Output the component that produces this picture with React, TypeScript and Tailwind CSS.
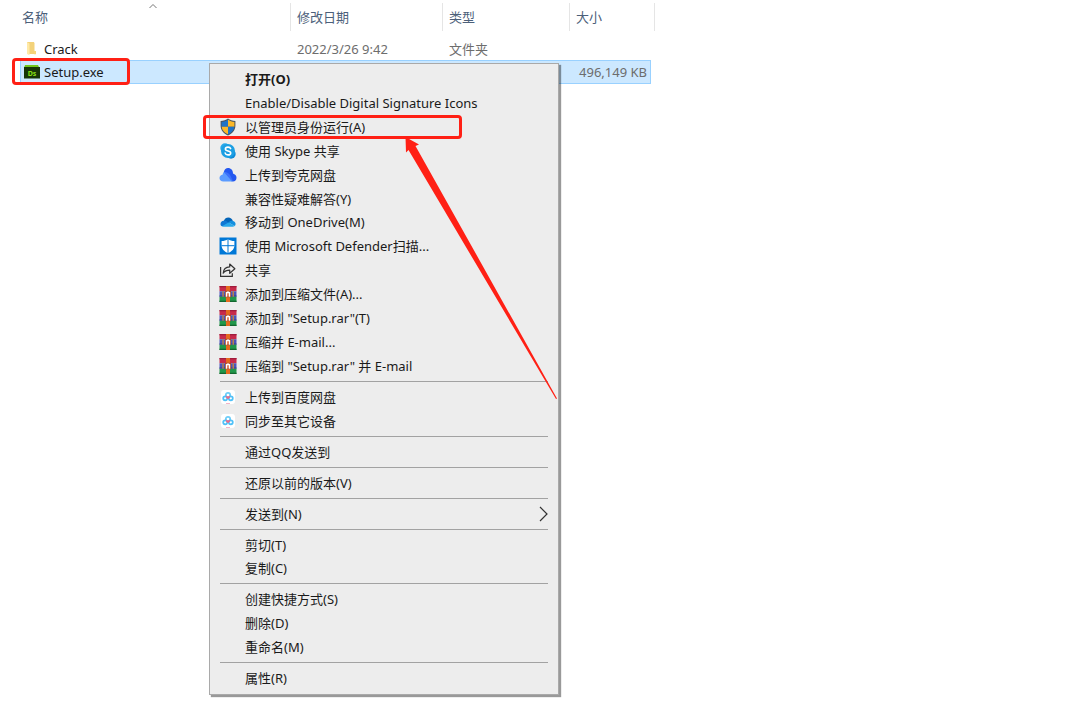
import type { ReactNode } from "react"

type MenuEntry = {
    label: string
    icon?: ReactNode
    bold?: boolean
    submenu?: boolean
}

function ShieldIcon() {
    return (
        <svg className="w-4 h-[18px]" viewBox="0 0 16 18" aria-hidden="true">
            <path d="M8 .5C6 2 3.500 2.900.6 3v4.500c0 4.800 3 8 7.400 10 4.400-2 7.400-5.200 7.400-10V3C12.500 2.900 10 2 8 .5z" fill="#4a5560" />
            <path d="M8 1.700v7H1.600V3.900C4 3.700 6.200 3 8 1.700z" fill="#1e73c8" />
            <path d="M8 1.700v7h6.400V3.900C12 3.700 9.800 3 8 1.700z" fill="#fcb827" />
            <path d="M1.700 8.700H8v7.600c-3.500-1.700-6-4.200-6.300-7.600z" fill="#fcb827" />
            <path d="M14.300 8.700H8v7.600c3.500-1.700 6-4.200 6.300-7.600z" fill="#1e73c8" />
        </svg>
    )
}

function SkypeIcon() {
    return (
        <svg className="w-4 h-4" viewBox="0 0 16 16" fill="none" aria-hidden="true">
            <circle cx="5" cy="5" r="4.700" fill="#28a8ea" />
            <circle cx="11" cy="11" r="4.700" fill="#0d8ad8" />
            <circle cx="8" cy="8" r="7" fill="#1c9fe3" />
            <path d="M10.600 5.600C10.200 4.500 9.200 4.100 8 4.100c-1.500 0-2.600.7-2.600 1.900 0 2.700 5.300 1.300 5.300 3.900 0 1.300-1.200 2-2.700 2-1.400 0-2.500-.6-2.800-1.800" stroke="#fff" strokeWidth="1.600" strokeLinecap="round" />
        </svg>
    )
}

function QuarkIcon() {
    return (
        <svg className="w-[18px] h-4" viewBox="0 0 18 16" aria-hidden="true">
            <path d="M4.800 5C5.400 2.400 7 1 9 1c3 0 5 2.300 5 5.500 2 .6 3.500 2.200 3.500 4.300 0 2.300-1.500 3.700-3.500 3.700-2.500 0-3.700-1.500-5-3.500z" fill="#2458f0" />
            <path d="M4.800 5C6.700 5.400 8 6.800 9 8.500l4.500 6H4.300C2 14.500.5 13 .5 11c0-2 1.300-3.300 3.300-3.600-.1-.9.400-1.900 1-2.400z" fill="#5b9bff" />
            <path d="M4.800 5c2.500-.4 5 1 6.500 3.500l2.700 5.800-2.500-1.800z" fill="#3c70fa" />
        </svg>
    )
}

function OneDriveIcon() {
    return (
        <svg className="w-4 h-4" viewBox="0 0 16 16" aria-hidden="true">
            <path d="M3.800 6.800C4.700 4.600 6.200 3.400 8.300 3.400c2.200 0 3.900 1.400 4.500 3.500L8 10z" fill="#0364b8" />
            <path d="M3.700 6.700c1.200-.3 2.300 0 3.300.7l4 3.600-9 1.300C1 11.800.5 10.900.5 9.900c0-1.700 1.300-3.100 3.200-3.200z" fill="#0f78d4" />
            <path d="M8.500 8.600c1-1.300 2.500-2 4.200-1.700 1.700.2 2.900 1.400 2.900 3 0 .9-.4 1.600-1 2.100z" fill="#1490df" />
            <path d="M1.900 12.300 8.500 8.500l6.200 3.400c-.5.5-1.200.8-2 .8H3.500c-.6 0-1.100-.1-1.600-.4z" fill="#28a8ea" />
        </svg>
    )
}

function DefenderIcon() {
    return (
        <svg className="w-[18px] h-[18px]" viewBox="0 0 18 18" aria-hidden="true">
            <path d="M.5.500h17v17H.5z" fill="#0078d7" />
            <path d="M9 2.200C7.200 3.300 5 4 2.600 4.100v4.400c0 3.400 2.500 5.800 6.400 7.600 3.900-1.800 6.400-4.200 6.400-7.600V4.100C13 4 10.800 3.300 9 2.200z" fill="#fff" />
            <path d="M9 2v14M2.500 8.700h13" stroke="#0078d7" strokeWidth="1" />
        </svg>
    )
}

function ShareIcon() {
    return (
        <svg className="w-[18px] h-4" viewBox="0 0 18 16" fill="none" stroke="#333" strokeWidth="1.200" aria-hidden="true">
            <path d="M1.600 5v9.400h11.700v-3.200" />
            <path d="M4.200 11.200C4.500 7.300 7 5 10.700 4.900V2l5.200 4.700-5.200 4.600V8.200C8 8.200 5.800 9 4.200 11.200z" strokeLinejoin="round" />
        </svg>
    )
}

function RarIcon() {
    return (
        <svg className="w-[18px] h-4" viewBox="0 0 18 16" aria-hidden="true">
            <path d="M.5 0h17v5.300H.5z" fill="#c72a4b" />
            <path d="M.5 0h17v1.300H.5z" fill="#a01c3c" />
            <path d="M.5 5.300h17v5.400H.5z" fill="#4a55b8" />
            <path d="M.5 9.500h17v1.200H.5z" fill="#343a8c" />
            <path d="M.5 10.700h17V16H.5z" fill="#21974a" />
            <path d="M.5 14.700h17V16H.5z" fill="#14672f" />
            <path d="M7 0h4v16H7z" fill="#e56a1e" />
            <path d="M3.300 5.300h1.500v5.400H3.300zM13.500 5.300H15v5.400h-1.500z" fill="#b8804a" />
            <path d="M6 4.800h6v6.400H6z" fill="#a8482c" />
            <path d="M6.800 10.700V6.200l2.200-1 2.200 1v4.500H9.700V7.500H8.300v3.200z" fill="#fff" />
            <path d="M8.300 7.300h1.400V10H8.300z" fill="#f08a60" />
        </svg>
    )
}

function BaiduIcon() {
    return (
        <svg className="w-[14px] h-[14px]" viewBox="0 0 14 14" fill="none" aria-hidden="true">
            <rect width="14" height="14" rx="3" fill="#fff" />
            <circle cx="7" cy="5" r="2.200" stroke="#6bcdf9" strokeWidth="1.700" />
            <circle cx="4.200" cy="8.300" r="2" stroke="#4fc1f8" strokeWidth="1.700" />
            <circle cx="9.800" cy="8.300" r="2" stroke="#4fc1f8" strokeWidth="1.700" />
            <path d="M5.200 6.400 7 8l1.800-1.600" stroke="#ee6a88" strokeWidth="1.700" />
            <path d="M5 13.500h4" stroke="#f3b4c8" />
        </svg>
    )
}

function FolderIcon() {
    return (
        <svg className="w-4 h-4" viewBox="0 0 16 16" aria-hidden="true">
            <path d="M3 1h7l.5 1.500V13H3z" fill="#f3d27a" />
            <path d="M3 1 5.500 2.500v11.800L3 13z" fill="#ffe9a6" />
            <path d="M10 10h2v3.300h-2z" fill="#f7d778" />
        </svg>
    )
}

function SetupIcon() {
    return (
        <svg className="w-4 h-4" viewBox="0 0 16 16" aria-hidden="true">
            <path d="M1 1h13l1.500 3H0z" fill="#74c61c" />
            <path d="M0 3h16v11.500H0z" fill="#173608" />
            <text x="8" y="11.500" textAnchor="middle" fontSize="7" fontWeight="700" fill="#8be016" className="font-['Noto_Sans',sans-serif]">Ds</text>
        </svg>
    )
}

const groups: MenuEntry[][] = [
    [
        { label: "打开(O)", bold: true },
        { label: "Enable/Disable Digital Signature Icons" },
        { label: "以管理员身份运行(A)", icon: <ShieldIcon /> },
        { label: "使用 Skype 共享", icon: <SkypeIcon /> },
        { label: "上传到夸克网盘", icon: <QuarkIcon /> },
        { label: "兼容性疑难解答(Y)" },
        { label: "移动到 OneDrive(M)", icon: <OneDriveIcon /> },
        { label: "使用 Microsoft Defender扫描...", icon: <DefenderIcon /> },
        { label: "共享", icon: <ShareIcon /> },
        { label: "添加到压缩文件(A)...", icon: <RarIcon /> },
        { label: '添加到 "Setup.rar"(T)', icon: <RarIcon /> },
        { label: "压缩并 E-mail...", icon: <RarIcon /> },
        { label: '压缩到 "Setup.rar" 并 E-mail', icon: <RarIcon /> },
    ],
    [
        { label: "上传到百度网盘", icon: <BaiduIcon /> },
        { label: "同步至其它设备", icon: <BaiduIcon /> },
    ],
    [{ label: "通过QQ发送到" }],
    [{ label: "还原以前的版本(V)" }],
    [{ label: "发送到(N)", submenu: true }],
    [{ label: "剪切(T)" }, { label: "复制(C)" }],
    [{ label: "创建快捷方式(S)" }, { label: "删除(D)" }, { label: "重命名(M)" }],
    [{ label: "属性(R)" }],
]

function MenuItem({ label, icon, bold, submenu }: MenuEntry) {
    return (
        <button
            type="button"
            role="menuitem"
            className={`flex flex-1 min-h-[23px] w-full items-center pl-2 pr-[10px] text-left whitespace-nowrap ${bold ? "font-bold" : ""}`}
        >
            <span className="flex w-5 shrink-0 justify-center">{icon}</span>
            <span className="ml-[7px] flex-1">{label}</span>
            {submenu && (
                <svg className="w-[9px] h-4" viewBox="0 0 9 16" fill="none" stroke="#333" strokeWidth="1.200" aria-hidden="true">
                    <path d="M1 1l7 7-7 7" />
                </svg>
            )}
        </button>
    )
}

function ContextMenu() {
    return (
        <div
            role="menu"
            className="absolute left-[209px] top-[63px] flex w-[350px] min-h-[632px] flex-col border border-[#a9a9a9] bg-[#ededed] pt-[3px] pb-1 text-[13px] leading-5 text-[#1a1a1a] shadow-[2px_2px_1px_rgba(0,0,0,0.4)]"
        >
            {groups.map((group, i) => (
                <div key={i} className="contents">
                    {i > 0 && <div role="separator" className="mx-2.5 my-[3px] h-px shrink-0 bg-[#a2a2a2]" />}
                    {group.map((entry) => (
                        <MenuItem key={entry.label} {...entry} />
                    ))}
                </div>
            ))}
        </div>
    )
}

function FileList() {
    return (
        <table className="ml-5 w-[635px] table-fixed border-separate border-spacing-0 text-left text-[13px] leading-5 text-[#6d6d6d]">
            <colgroup>
                <col className="w-[271px]" />
                <col className="w-[152px]" />
                <col className="w-[127px]" />
                <col className="w-[81px]" />
                <col className="w-1" />
            </colgroup>
            <thead>
                <tr className="h-7 text-[#4c607a]">
                    <th className="relative border-r border-[#e5e5e5] p-0 pl-0.5 font-normal">
                        名称
                        <svg className="absolute left-[129px] top-0 w-2 h-[6px]" viewBox="0 0 8 6" fill="none" stroke="#777" aria-hidden="true">
                            <path d="M.5 5 4 1.500 7.500 5" />
                        </svg>
                    </th>
                    <th className="border-r border-[#e5e5e5] p-0 pl-1.5 font-normal">修改日期</th>
                    <th className="border-r border-[#e5e5e5] p-0 pl-1.5 font-normal">类型</th>
                    <th className="p-0 pl-1.5 font-normal">大小</th>
                    <td className="border-r border-[#e5e5e5] p-0" />
                </tr>
            </thead>
            <tbody>
                <tr>
                    <td className="h-[29px] p-0 pt-1.5 pl-1">
                        <span className="flex items-center gap-1 text-[#1a1a1a]"><FolderIcon />Crack</span>
                    </td>
                    <td className="p-0 pt-1.5 pl-1.5">2022/3/26 9:42</td>
                    <td className="p-0 pt-1.5 pl-1.5">文件夹</td>
                    <td />
                    <td />
                </tr>
                <tr className="h-6" aria-selected="true">
                    <td className="border-y border-l border-[#99d1ff] bg-[#cce8ff] p-0 pl-[3px]">
                        <span className="flex items-center gap-1 text-[#1a1a1a]"><SetupIcon />Setup.exe</span>
                    </td>
                    <td className="border-y border-[#99d1ff] bg-[#cce8ff] p-0" />
                    <td className="border-y border-[#99d1ff] bg-[#cce8ff] p-0" />
                    <td className="border-y border-r border-[#99d1ff] bg-[#cce8ff] p-0 pr-[3px] text-right whitespace-nowrap">496,149 KB</td>
                    <td />
                </tr>
            </tbody>
        </table>
    )
}

export default function App() {
    return (
        <div className="relative min-h-screen bg-white pt-[3px] font-['Noto_Sans','Noto_Sans_CJK_SC',sans-serif]">
            <FileList />
            <ContextMenu />

            {/* Highlights drawn over the file and the menu entry */}
            <div className="pointer-events-none absolute left-3 top-[58px] h-[27px] w-[118px] rounded-[4px] border-3 border-[#ff2015]" />
            <div className="pointer-events-none absolute left-[203px] top-[115px] h-6 w-[259px] rounded-[4px] border-3 border-[#ff2015]" />
            <svg className="pointer-events-none absolute left-[400px] top-[130px] w-40 h-[270px]" viewBox="400 130 160 270" aria-hidden="true">
                <path d="M405.500 137 419 144.500 415.500 146 557 398.500 556 399 408.500 150 406 152.500z" fill="#ff2015" />
            </svg>
        </div>
    )
}
